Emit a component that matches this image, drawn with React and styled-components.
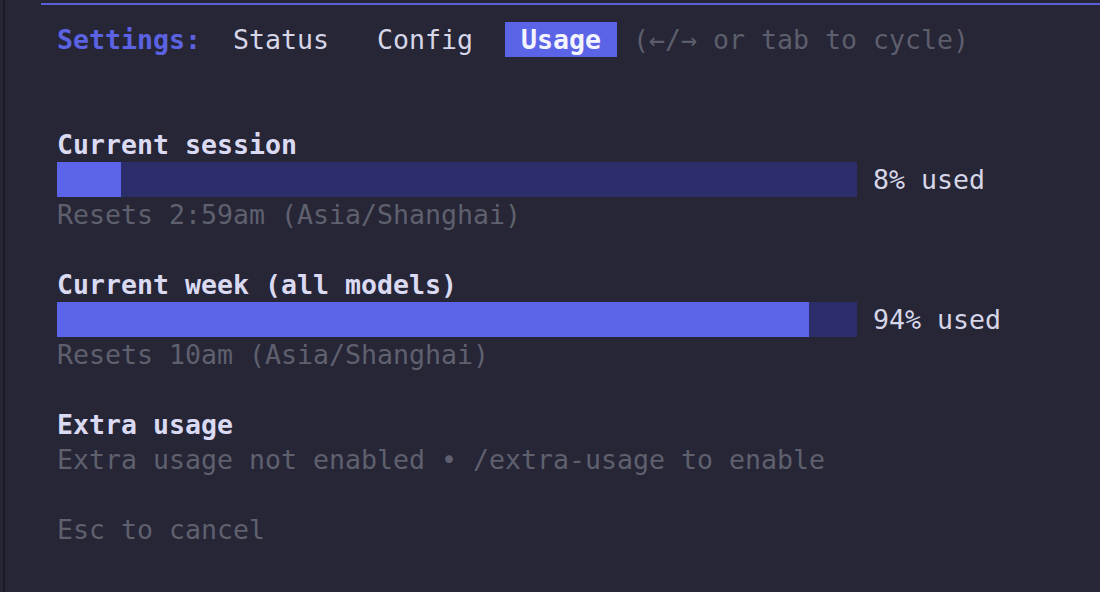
import React from 'react';
import styled, { createGlobalStyle } from 'styled-components';

const GlobalStyle = createGlobalStyle`
  html, body {
    margin: 0;
    padding: 0;
    background: #262637;
  }
  body {
    font-family: "DejaVu Sans Mono", "Liberation Mono", monospace;
    font-size: 26.58px;
    line-height: 35px;
    color: #d6d6e8;
  }
`;

const Screen = styled.div`
  display: flex;
  height: 592px;
  padding-left: 3px;
  overflow: hidden;
`;

const PaneDivider = styled.div`
  width: 2px;
  background: #1b1b27;
  flex-shrink: 0;
`;

const Panel = styled.div`
  flex: 1;
  margin: 3px 0 0 36px;
  border-top: 2px solid #5a60d8;
  padding: 17px 0 0 16px;
  display: flex;
  flex-direction: column;
  gap: 35px;
`;

const TabBar = styled.div`
  display: flex;
  height: 35px;
  white-space: pre;
`;

const TabLabel = styled.span`
  color: #5c63e2;
  font-weight: bold;
  margin-right: 1ch;
`;

const Tab = styled.span`
  padding: 0 1ch;
  margin-right: 1ch;
  color: ${({ $active }) => ($active ? '#f4f4ff' : '#d6d6e8')};
  background: ${({ $active }) => ($active ? '#5b63e6' : 'transparent')};
  font-weight: ${({ $active }) => ($active ? 'bold' : 'normal')};
`;

const Hint = styled.span`
  color: #5d5e6c;
`;

const Body = styled.div`
  display: flex;
  flex-direction: column;
  gap: 35px;
  padding-top: 35px;
`;

const Section = styled.section`
  display: flex;
  flex-direction: column;
`;

const Heading = styled.div`
  font-weight: bold;
  color: #dadaf2;
  white-space: pre;
`;

const Muted = styled.div`
  color: #5f606e;
  white-space: pre;
`;

const BarRow = styled.div`
  display: flex;
  align-items: center;
  height: 35px;
`;

const Track = styled.div`
  width: 50ch;
  height: 35px;
  background: #2b2e6b;
  flex-shrink: 0;
`;

const Fill = styled.div`
  height: 100%;
  background: #5c64ea;
`;

const UsedLabel = styled.span`
  margin-left: 1ch;
  color: #d6d6e8;
  white-space: pre;
`;

const tabs = ['Status', 'Config', 'Usage'];

const meters = [
  { title: 'Current session', used: 8, reset: 'Resets 2:59am (Asia/Shanghai)' },
  { title: 'Current week (all models)', used: 94, reset: 'Resets 10am (Asia/Shanghai)' },
];

const Meter = ({ title, used, reset }) => (
  <Section>
    <Heading>{title}</Heading>
    <BarRow>
      <Track>
        <Fill style={{ width: `${Math.round((used / 100) * 50) * 2}%` }} />
      </Track>
      <UsedLabel>{used}% used</UsedLabel>
    </BarRow>
    <Muted>{reset}</Muted>
  </Section>
);

export default function App() {
  return (
    <>
      <GlobalStyle />
      <Screen>
        <PaneDivider />
        <Panel>
          <TabBar>
            <TabLabel>Settings:</TabLabel>
            {tabs.map((t) => (
              <Tab key={t} $active={t === 'Usage'}>{t}</Tab>
            ))}
            <Hint>(←/→ or tab to cycle)</Hint>
          </TabBar>
          <Body>
            {meters.map((m) => (
              <Meter key={m.title} {...m} />
            ))}
            <Section>
              <Heading>Extra usage</Heading>
              <Muted>Extra usage not enabled • /extra-usage to enable</Muted>
            </Section>
            <Muted>Esc to cancel</Muted>
          </Body>
        </Panel>
      </Screen>
    </>
  );
}
